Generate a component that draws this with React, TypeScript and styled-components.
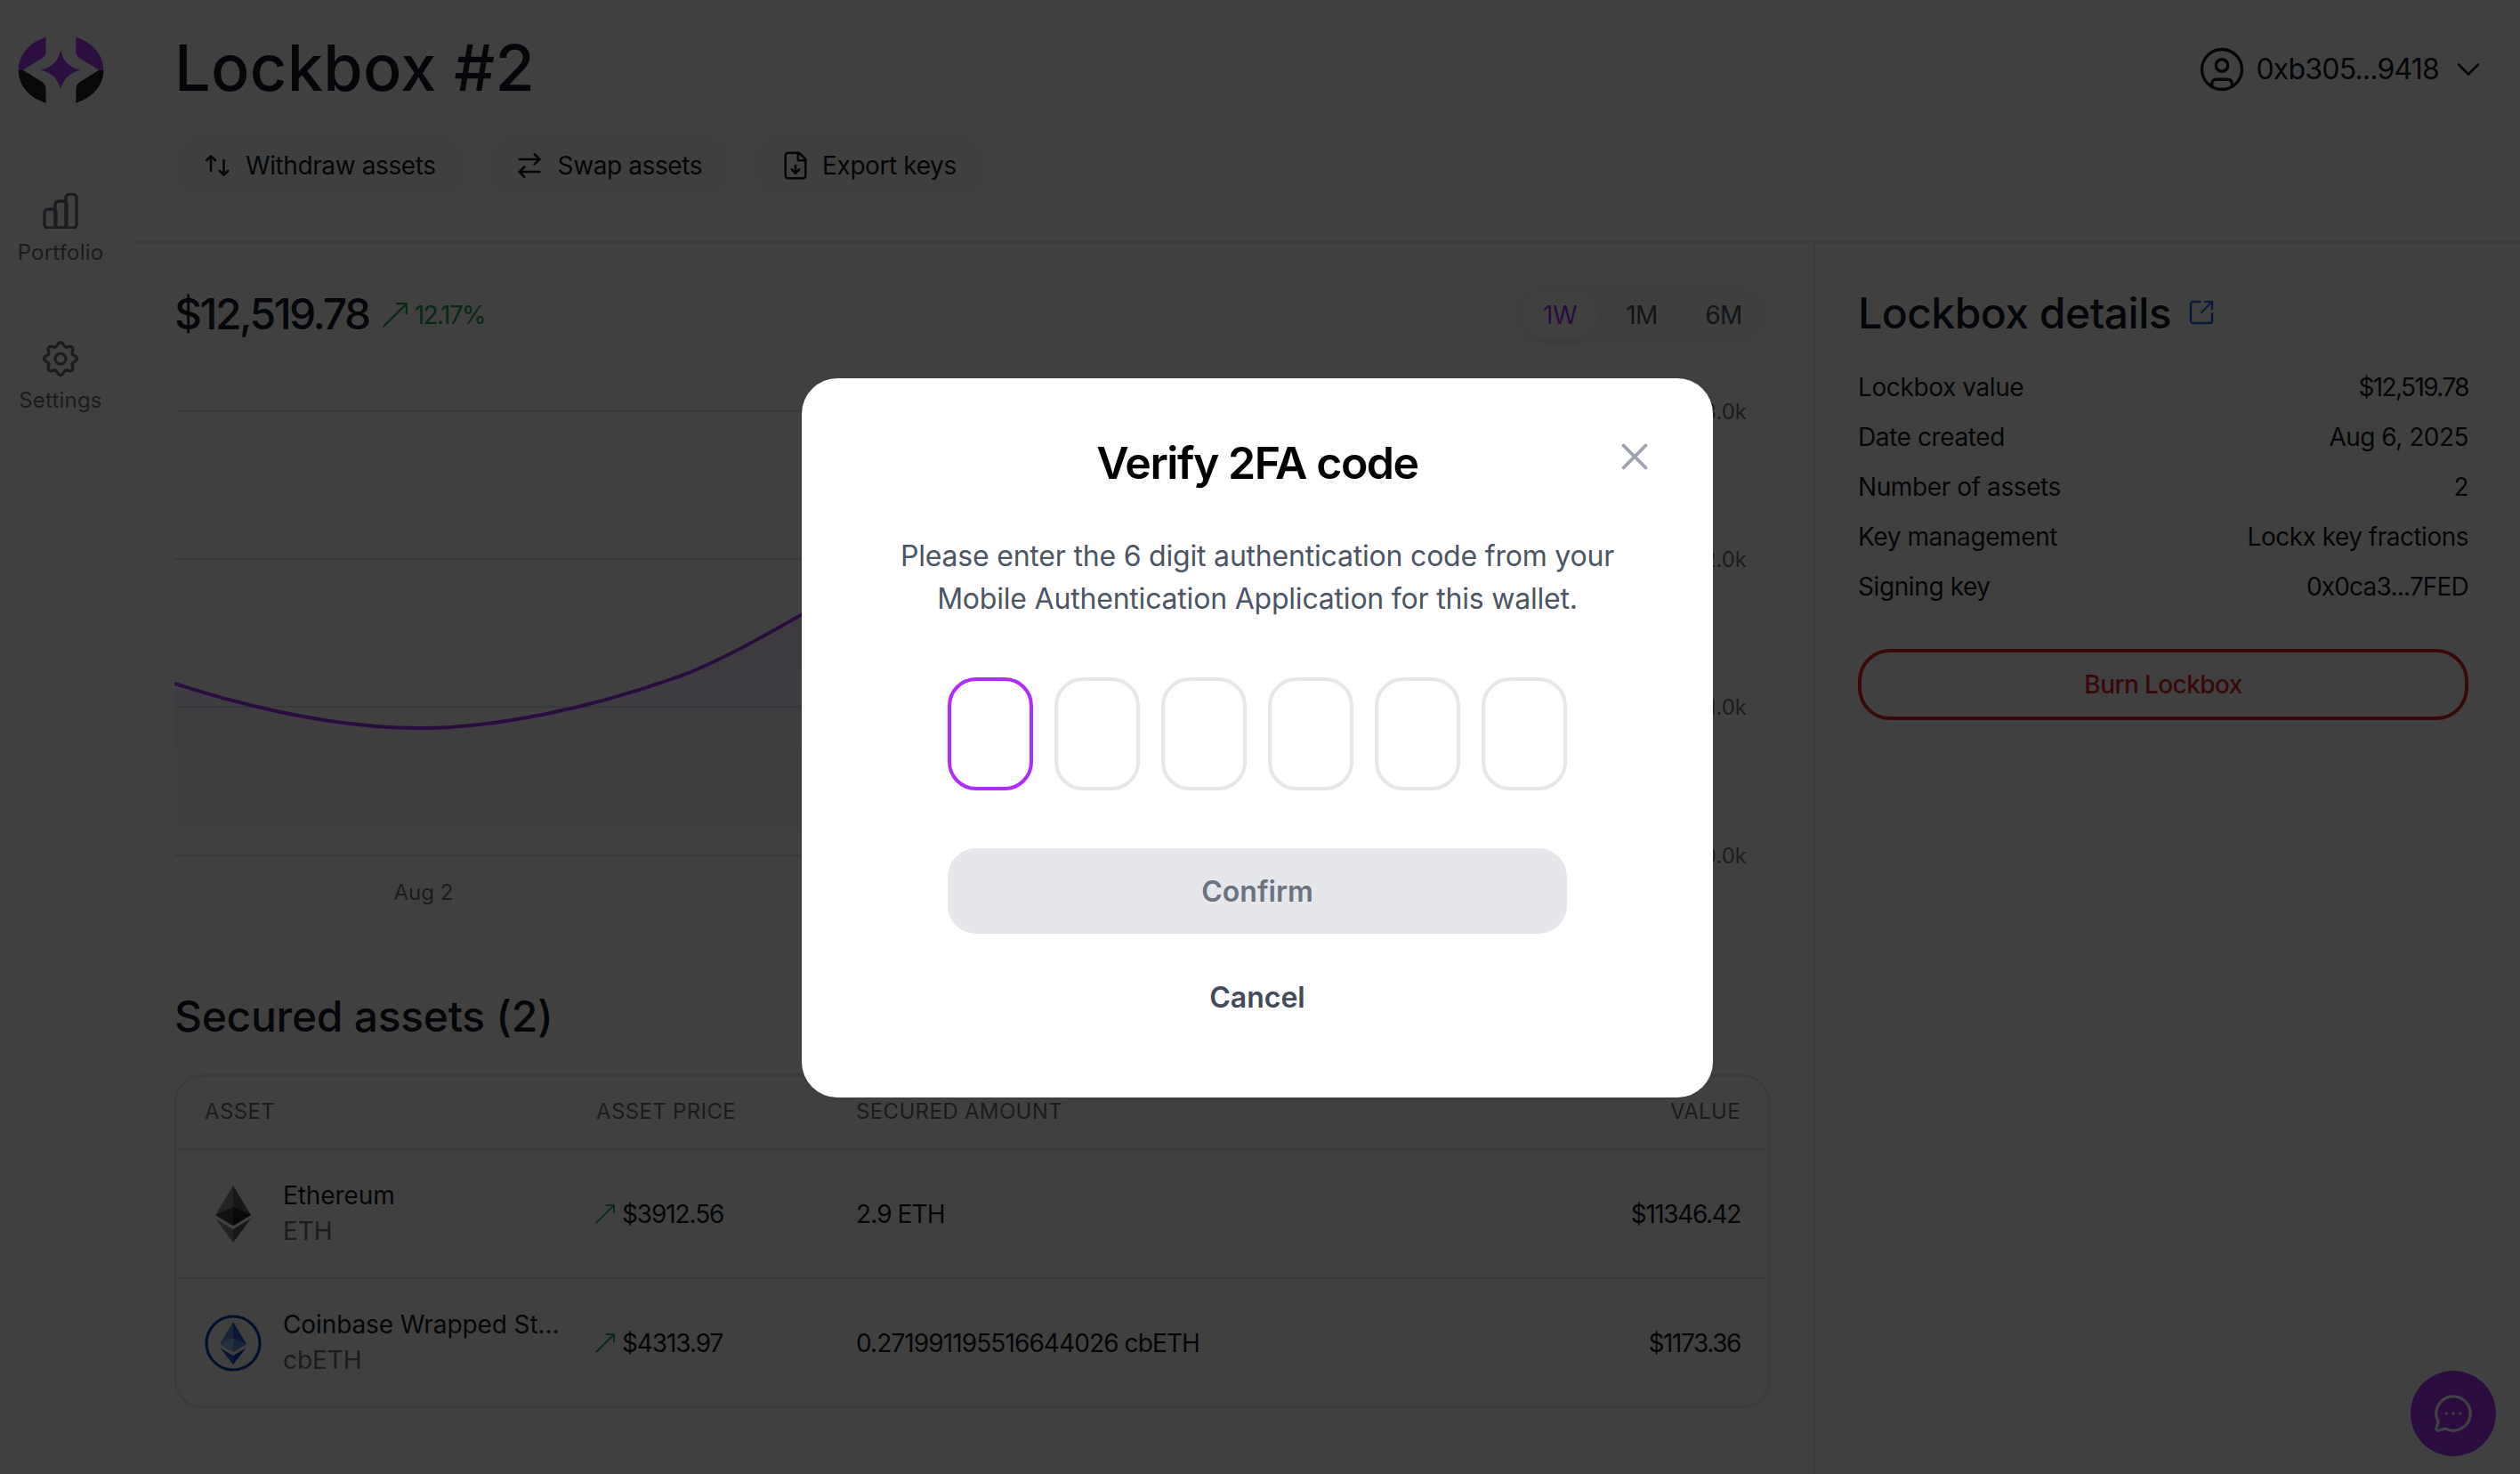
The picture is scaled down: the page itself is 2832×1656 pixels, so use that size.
import React from 'react';
import styled, { createGlobalStyle } from 'styled-components';
import {
  ArrowRightLeft,
  ChevronDown,
  CircleUser,
  FileDown,
  MessageCircleMore,
  MoveUpRight,
  SquareArrowOutUpRight,
  X,
} from 'lucide-react';

const FONT = `Inter, "Liberation Sans", sans-serif`;

function WithdrawIcon() {
  return (
    <svg width="34" height="24" viewBox="-4.5 0 34 24" fill="none" stroke="currentColor" strokeWidth="2.6" strokeLinecap="round" strokeLinejoin="round">
      <path d="M6.5 1.5V18M1.8 6 6.5 1.3 11.2 6" />
      <path d="M21 6V22.5M16.3 18 21 22.7 25.7 18" />
    </svg>
  );
}

const actions = [
  { title: 'Withdraw assets', icon: <WithdrawIcon />, gap: 16 },
  { title: 'Swap assets', icon: <ArrowRightLeft size={34} strokeWidth={1.8} />, gap: 15 },
  { title: 'Export keys', icon: <FileDown size={34} strokeWidth={1.8} />, gap: 13 },
];

const details = [
  { label: 'Lockbox value', value: '$12,519.78', spacing: -1.6 },
  { label: 'Date created', value: 'Aug 6, 2025', spacing: -0.5 },
  { label: 'Number of assets', value: '2', spacing: -0.5 },
  { label: 'Key management', value: 'Lockx key fractions', spacing: -0.5 },
  { label: 'Signing key', value: '0x0ca3...7FED', spacing: -0.8 },
];

const gridLines = [
  { y: 76, label: '3.0k' },
  { y: 242, label: '2.0k' },
  { y: 408, label: '1.0k' },
  { y: 575, label: '0.0k' },
];

const linePath =
  'M0 382 C100 414 190 432 276 432 C360 432 470 410 578 370 C625 350 660 330 704 305 C790 245 860 200 960 160 C1150 110 1400 90 1700 70';

// eight rounded lobes around the centre of a 40 box
const gearPath = Array.from({ length: 97 }, (_, i) => {
  const a = (i / 96) * Math.PI * 2;
  const r = 16.4 + 2.1 * Math.cos(8 * a);
  return `${i === 0 ? 'M' : 'L'}${(20 + r * Math.sin(a)).toFixed(2)} ${(20 - r * Math.cos(a)).toFixed(2)}`;
}).join(' ');

function Logo() {
  return (
    <svg width="99" height="78" viewBox="55 115 298 235">
      <path d="M153 123C100 140 60 180 60 235H75L140 195Q153 187 153 170Z" fill="#B03CFF" />
      <path d="M255 123C308 140 348 180 348 235H333L268 195Q255 187 255 170Z" fill="#B03CFF" />
      <path d="M60 235C60 290 100 330 153 346V300Q153 283 140 275L75 235Z" fill="#222" />
      <path d="M348 235C348 290 308 330 255 346V300Q255 283 268 275L333 235Z" fill="#222" />
      <path d="M203 168Q215 223 270 235Q215 247 203 302Q191 247 135 235Q191 223 203 168Z" fill="#B03CFF" />
    </svg>
  );
}

function BarsIcon() {
  return (
    <svg width="40" height="40" viewBox="0 0 40 40" fill="none" stroke="#6B7280" strokeWidth="3.4">
      <rect x="2" y="18" width="13" height="21" rx="4" />
      <rect x="14" y="9" width="13" height="30" rx="4" />
      <rect x="26" y="1" width="12" height="38" rx="4" />
    </svg>
  );
}

function GearIcon() {
  return (
    <svg width="40" height="40" viewBox="0 0 40 40" fill="none" stroke="#6B7280" strokeWidth="3.4">
      <path d={gearPath} />
      <circle cx="20" cy="20" r="6" strokeWidth="3.2" />
    </svg>
  );
}

function EthIcon() {
  return (
    <svg width="64" height="64" viewBox="0 0 64 64">
      <path d="M32 0 12 33 32 45Z" fill="#8C8C8C" />
      <path d="M32 0 52 33 32 45Z" fill="#5C5C5C" />
      <path d="M12 33 32 24 32 45Z" fill="#444" />
      <path d="M52 33 32 24 32 45Z" fill="#222" />
      <path d="M12 37 32 64V49Z" fill="#8C8C8C" />
      <path d="M52 37 32 64V49Z" fill="#5C5C5C" />
    </svg>
  );
}

function CbEthIcon() {
  return (
    <svg width="64" height="64" viewBox="0 0 64 64">
      <circle cx="32" cy="32" r="30" fill="none" stroke="#0B40B8" strokeWidth="3.2" />
      <path d="M32 8 17 33 32 42Z" fill="#6E93E6" />
      <path d="M32 8 47 33 32 42Z" fill="#2A5BD0" />
      <path d="M17 33 32 26V42Z" fill="#9DB6EE" />
      <path d="M47 33 32 26V42Z" fill="#6E93E6" />
      <path d="M17 37 32 56V46Z" fill="#2A5BD0" />
      <path d="M47 37 32 56V46Z" fill="#0B40B8" />
    </svg>
  );
}

function App() {
  return (
    <>
      <GlobalStyle />
      <Page>
        <Sidebar>
          <LogoBox>
            <Logo />
          </LogoBox>
          <NavItem>
            <BarsIcon />
            <NavLabel>Portfolio</NavLabel>
          </NavItem>
          <NavItem>
            <GearIcon />
            <NavLabel>Settings</NavLabel>
          </NavItem>
        </Sidebar>

        <Main>
          <Header>
            <TitleRow>
              <PageTitle>Lockbox #2</PageTitle>
              <Account>
                <CircleUser size={54} strokeWidth={1.5} />
                <Address>0xb305...9418</Address>
                <ChevronIcon>
                  <ChevronDown size={44} strokeWidth={1.4} />
                </ChevronIcon>
              </Account>
            </TitleRow>
            <Actions>
              {actions.map(({ title, icon, gap }) => (
                <ActionButton key={title} $gap={gap}>
                  {icon}
                  {title}
                </ActionButton>
              ))}
            </Actions>
          </Header>

          <Body>
            <LeftColumn>
              <PriceRow>
                <PriceGroup>
                  <Price>$12,519.78</Price>
                  <Change>
                    <MoveUpRight size={44} strokeWidth={1.2} />
                    <ChangeValue>12.17%</ChangeValue>
                  </Change>
                </PriceGroup>
                <Ranges>
                  <Range $active>1W</Range>
                  <Range>1M</Range>
                  <Range>6M</Range>
                </Ranges>
              </PriceRow>

              <ChartSvg viewBox="0 0 1793 650">
                <defs>
                  <linearGradient id="area" x1="0" y1="0" x2="0" y2="1">
                    <stop offset="0" stopColor="#A832FC" stopOpacity="0.22" />
                    <stop offset="1" stopColor="#A832FC" stopOpacity="0" />
                  </linearGradient>
                </defs>
                {gridLines.map(({ y, label }) => (
                  <g key={label}>
                    <line x1="0" x2="1730" y1={y} y2={y} stroke="#E5E7EB" strokeWidth="2" />
                    <ChartLabel x="1767" y={y + 9} textAnchor="end">
                      {label}
                    </ChartLabel>
                  </g>
                ))}
                <path d={`${linePath} V575 H0 Z`} fill="url(#area)" />
                <path d={linePath} fill="none" stroke="#A832FC" strokeWidth="4" />
                <ChartLabel x="280" y="625" textAnchor="middle">
                  Aug 2
                </ChartLabel>
              </ChartSvg>

              <SectionTitle>Secured assets (2)</SectionTitle>
              <Table>
                <HeadRow>
                  <span>Asset</span>
                  <span>Asset price</span>
                  <span>Secured amount</span>
                  <span>Value</span>
                </HeadRow>
                <AssetRow>
                  <AssetCell>
                    <EthIcon />
                    <AssetNames>
                      <AssetName>Ethereum</AssetName>
                      <AssetSymbol>ETH</AssetSymbol>
                    </AssetNames>
                  </AssetCell>
                  <PriceCell>
                    <MoveUpRight size={34} color="#16A34A" strokeWidth={1.3} />
                    $3912.56
                  </PriceCell>
                  <span>2.9 ETH</span>
                  <ValueCell>$11346.42</ValueCell>
                </AssetRow>
                <AssetRow>
                  <AssetCell>
                    <CbEthIcon />
                    <AssetNames>
                      <AssetName>Coinbase Wrapped St…</AssetName>
                      <AssetSymbol>cbETH</AssetSymbol>
                    </AssetNames>
                  </AssetCell>
                  <PriceCell>
                    <MoveUpRight size={34} color="#16A34A" strokeWidth={1.3} />
                    $4313.97
                  </PriceCell>
                  <span>0.271991195516644026 cbETH</span>
                  <ValueCell>$1173.36</ValueCell>
                </AssetRow>
              </Table>
            </LeftColumn>

            <RightColumn>
              <DetailsTitle>
                Lockbox details
                <SquareArrowOutUpRight size={32} color="#2563EB" strokeWidth={1.8} />
              </DetailsTitle>
              <DetailList>
                {details.map(({ label, value, spacing }) => (
                  <DetailRow key={label}>
                    <span>{label}</span>
                    <DetailValue $spacing={spacing}>{value}</DetailValue>
                  </DetailRow>
                ))}
              </DetailList>
              <BurnButton>Burn Lockbox</BurnButton>
            </RightColumn>
          </Body>
        </Main>

        <ChatButton>
          <MessageCircleMore size={46} color="#fff" strokeWidth={1.7} />
        </ChatButton>
      </Page>

      <Overlay>
        <Modal>
          <CloseButton>
            <X size={50} strokeWidth={1.8} />
          </CloseButton>
          <ModalTitle>Verify 2FA code</ModalTitle>
          <ModalText>
            Please enter the 6 digit authentication code from your
            <br />
            Mobile Authentication Application for this wallet.
          </ModalText>
          <CodeRow>
            {[0, 1, 2, 3, 4, 5].map((i) => (
              <CodeBox key={i} $focused={i === 0} />
            ))}
          </CodeRow>
          <ConfirmButton>Confirm</ConfirmButton>
          <CancelButton>Cancel</CancelButton>
        </Modal>
      </Overlay>
    </>
  );
}

const GlobalStyle = createGlobalStyle`
  * {
    box-sizing: border-box;
  }

  html,
  body {
    margin: 0;
    height: 100%;
    overflow: hidden;
    background: #fff;
    font-family: ${FONT};
    color: #111827;
  }
`;

const Page = styled.div`
  display: flex;
  width: 2832px;
  height: 1656px;
  background: #fff;
`;

const Sidebar = styled.aside`
  display: flex;
  flex-direction: column;
  align-items: center;
  flex: 0 0 148px;
  width: 148px;
  padding-top: 39px;
  padding-right: 12px;
`;

const LogoBox = styled.div`
  display: flex;
  height: 78px;
  margin-bottom: 100px;
`;

const NavItem = styled.div`
  display: flex;
  flex-direction: column;
  align-items: center;
  gap: 10px;
  height: 166px;
`;

const NavLabel = styled.span`
  font-size: 24px;
  line-height: 34px;
  color: #6b7280;
  letter-spacing: 0.2px;
`;

const Main = styled.main`
  display: flex;
  flex-direction: column;
  flex: 1;
  min-width: 0;
`;

const Header = styled.header`
  height: 273px;
  padding: 32px 47px 0 48px;
  border-bottom: 2px solid #e5e7eb;
`;

const TitleRow = styled.div`
  display: flex;
  justify-content: space-between;
  align-items: center;
  height: 88px;
`;

const PageTitle = styled.h1`
  margin: 0;
  font-size: 72px;
  line-height: 88px;
  font-weight: 500;
  letter-spacing: 0.3px;
  color: #111827;
`;

const Account = styled.div`
  display: flex;
  align-items: center;
  margin-top: 4px;
  color: #111827;
`;

const Address = styled.span`
  margin: 0 11px;
  font-size: 32px;
  line-height: 40px;
  letter-spacing: -0.8px;
`;

const ChevronIcon = styled.span`
  display: flex;
  margin-right: -11px;
`;

const Actions = styled.div`
  display: flex;
  gap: 26px;
  margin-top: 30px;
`;

const ActionButton = styled.button<{ $gap: number }>`
  display: flex;
  align-items: center;
  gap: ${({ $gap }) => $gap}px;
  height: 72px;
  padding: 0 32px 0 30px;
  border: 0;
  border-radius: 32px;
  background: #f5faf5;
  font-family: ${FONT};
  font-size: 28px;
  letter-spacing: -0.4px;
  color: #111827;
`;

const Body = styled.div`
  display: flex;
  flex: 1;
  min-height: 0;
`;

const LeftColumn = styled.section`
  flex: 0 0 1892px;
  padding: 49px 49px 0 48px;
  border-right: 2px solid #e5e7eb;
`;

const PriceRow = styled.div`
  display: flex;
  justify-content: space-between;
  align-items: center;
  height: 64px;
  padding-right: 2px;
`;

const PriceGroup = styled.div`
  display: flex;
  align-items: center;
  gap: 7px;
`;

const Price = styled.span`
  margin-top: -3px;
  font-size: 48px;
  font-weight: 500;
  letter-spacing: -2.5px;
  color: #111827;
`;

const Change = styled.span`
  display: flex;
  align-items: center;
  color: #16a34a;
`;

const ChangeValue = styled.span`
  font-size: 28px;
  letter-spacing: -1.6px;
`;

const Ranges = styled.div`
  display: flex;
  flex-shrink: 0;
  gap: 6px;
  height: 68px;
  padding: 6px 7px;
  border-radius: 34px;
  background: #f5faf5;
`;

const Range = styled.span<{ $active?: boolean }>`
  display: flex;
  align-items: center;
  justify-content: center;
  width: 86px;
  font-size: 28px;
  letter-spacing: -0.5px;
  color: ${({ $active }) => ($active ? '#a832fc' : '#4b5563')};
  background: ${({ $active }) => ($active ? '#fff' : 'transparent')};
  box-shadow: ${({ $active }) => ($active ? '0 2px 4px rgba(0, 0, 0, 0.06)' : 'none')};
  border-radius: 28px;
`;

const ChartSvg = styled.svg`
  display: block;
  width: 1793px;
  height: 650px;
`;

const ChartLabel = styled.text`
  font-family: ${FONT};
  font-size: 24px;
  fill: #6b7280;
`;

const SectionTitle = styled.h2`
  margin: 74px 0 0;
  font-size: 48px;
  line-height: 64px;
  font-weight: 500;
  letter-spacing: -0.3px;
  color: #111827;
`;

const Table = styled.div`
  width: 1793px;
  margin-top: 33px;
  border: 2px solid #e5e7eb;
  border-radius: 32px;
`;

const tableColumns = `
  display: grid;
  grid-template-columns: 440px 292px 1fr auto;
  align-items: center;
  padding: 0 31px 0 32px;
`;

const HeadRow = styled.div`
  ${tableColumns}
  height: 81px;
  padding-bottom: 2px;
  font-size: 24px;
  letter-spacing: 0.35px;
  text-transform: uppercase;
  color: #6b7280;
`;

const AssetRow = styled.div`
  ${tableColumns}
  height: 145px;
  border-top: 2px solid #e5e7eb;
  font-size: 28px;
  letter-spacing: -0.9px;
  color: #111827;
`;

const ValueCell = styled.span`
  text-align: right;
  letter-spacing: -1.4px;
`;

const AssetCell = styled.div`
  display: flex;
  align-items: center;
  gap: 24px;
`;

const AssetNames = styled.div`
  display: flex;
  flex-direction: column;
  gap: 4px;
  margin-top: -2px;
`;

const AssetName = styled.span`
  font-size: 28px;
  line-height: 36px;
  letter-spacing: -0.1px;
`;

const AssetSymbol = styled.span`
  font-size: 28px;
  line-height: 36px;
  letter-spacing: -0.1px;
  color: #6b7280;
`;

const PriceCell = styled.span`
  display: flex;
  align-items: center;
  gap: 2px;
  margin-left: -7px;
  letter-spacing: -1.1px;
`;

const RightColumn = styled.section`
  flex: 1;
  padding: 46px 58px 0 48px;
`;

const DetailsTitle = styled.h2`
  display: flex;
  align-items: center;
  gap: 18px;
  margin: 0;
  height: 64px;
  font-size: 48px;
  font-weight: 500;
  letter-spacing: -0.5px;
  color: #111827;
`;

const DetailList = styled.div`
  display: flex;
  flex-direction: column;
  gap: 16px;
  margin-top: 32px;
`;

const DetailRow = styled.div`
  display: flex;
  justify-content: space-between;
  font-size: 28px;
  line-height: 40px;
  letter-spacing: -0.4px;
  color: #111827;
`;

const DetailValue = styled.span<{ $spacing: number }>`
  letter-spacing: ${({ $spacing }) => $spacing}px;
`;

const BurnButton = styled.button`
  width: 100%;
  height: 80px;
  margin-top: 50px;
  border: 4px solid #dc2626;
  border-radius: 36px;
  background: transparent;
  font-family: ${FONT};
  font-size: 28px;
  font-weight: 500;
  letter-spacing: -0.6px;
  color: #dc2626;
`;

const ChatButton = styled.div`
  position: fixed;
  right: 27px;
  bottom: 20px;
  display: flex;
  align-items: center;
  justify-content: center;
  width: 96px;
  height: 96px;
  border-radius: 50%;
  background: #a832fc;
`;

const Overlay = styled.div`
  position: fixed;
  inset: 0;
  display: flex;
  align-items: center;
  justify-content: center;
  padding: 2px 6px 0 0;
  background: rgba(0, 0, 0, 0.75);
`;

const Modal = styled.div`
  position: relative;
  display: flex;
  flex-direction: column;
  align-items: center;
  width: 1024px;
  height: 808px;
  padding-top: 60px;
  border-radius: 40px;
  background: #fff;
`;

const CloseButton = styled.div`
  position: absolute;
  top: 63px;
  right: 63px;
  display: flex;
  color: #9ca3af;
`;

const ModalTitle = styled.h3`
  margin: 0;
  font-size: 50px;
  line-height: 70px;
  font-weight: 600;
  letter-spacing: -1.45px;
  color: #000;
`;

const ModalText = styled.p`
  margin: 46px 0 0;
  font-size: 32px;
  line-height: 48px;
  letter-spacing: -0.2px;
  text-align: center;
  color: #4b5563;
`;

const CodeRow = styled.div`
  display: flex;
  gap: 24px;
  margin-top: 64px;
`;

const CodeBox = styled.div<{ $focused?: boolean }>`
  width: 96px;
  height: 127px;
  border: 4px solid ${({ $focused }) => ($focused ? '#B12BFF' : '#e5e7eb')};
  border-radius: 32px;
`;

const ConfirmButton = styled.div`
  display: flex;
  align-items: center;
  justify-content: center;
  width: 696px;
  height: 96px;
  margin-top: 65px;
  border-radius: 32px;
  background: #e5e7eb;
  font-size: 32px;
  font-weight: 600;
  color: #6b7280;
`;

const CancelButton = styled.div`
  margin-top: 50px;
  font-size: 32px;
  line-height: 44px;
  font-weight: 600;
  color: #424a5a;
`;

export default App;
